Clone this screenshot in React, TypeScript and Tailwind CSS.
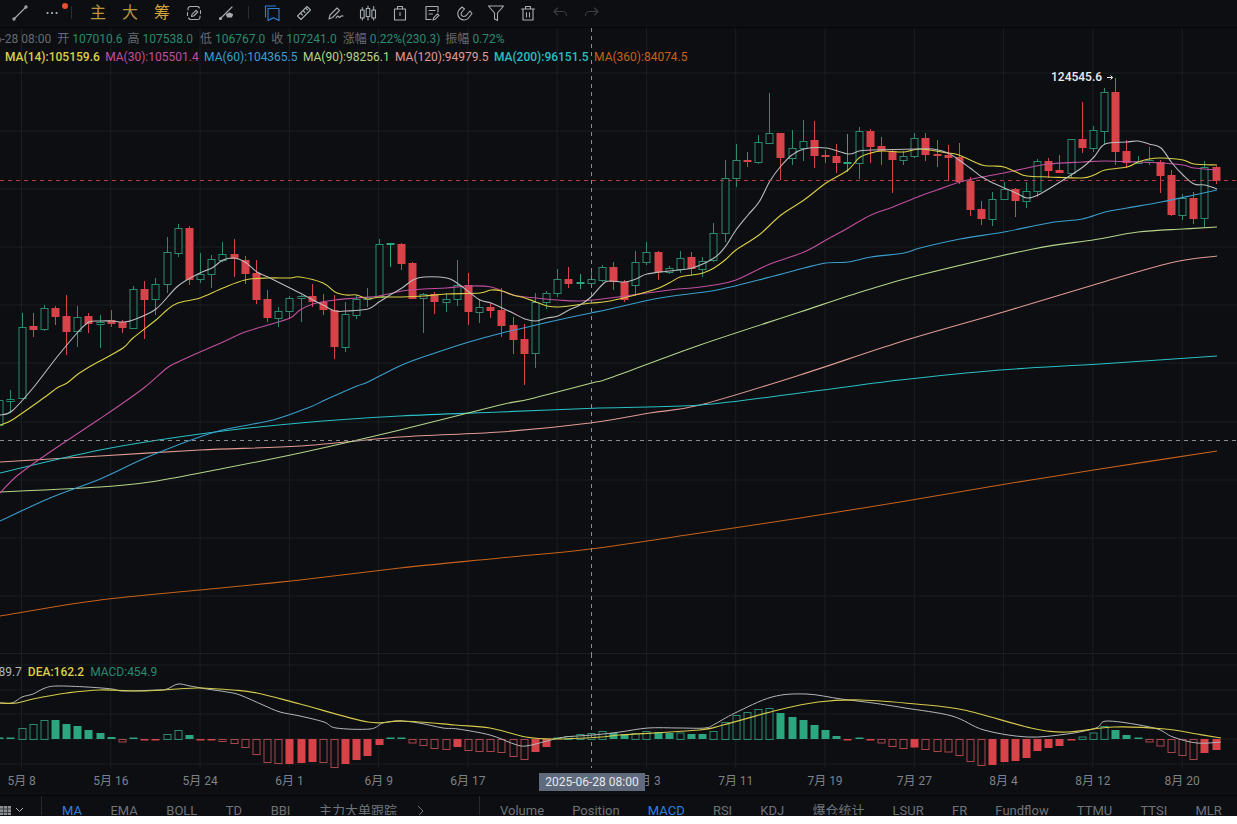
import React from 'react';

type Candle = [string, number, number, number, number];
type Bar = [string, number];
type Pt = [number, number];

const FONT = "font-['Roboto','Noto_Sans_CJK_SC',sans-serif]";

// x of a candle, index 0 sits on the 5月8 tick
const cx = (i: number) => 21.5 + 11.16 * i;

// type (h hollow green, r red, g solid green), high, top, bottom, low
const candles: Candle[] = [
  ['h', 400, 400, 425, 425], ['h', 390, 399, 401, 413],
  ['h', 313, 327, 398, 398], ['r', 313, 326, 330, 337], ['h', 305, 308, 329, 331], ['r', 306, 308, 317, 325],
  ['r', 295, 316, 332, 355], ['h', 306, 317, 331, 347], ['r', 313, 316, 324, 333], ['h', 315, 322, 324, 348],
  ['r', 310, 320, 324, 327], ['r', 320, 322, 328, 333], ['h', 286, 289, 328, 328], ['r', 281, 289, 300, 339],
  ['h', 278, 284, 299, 315], ['h', 237, 252, 284, 293], ['h', 224, 228, 253, 257], ['r', 226, 228, 280, 285],
  ['h', 253, 274, 279, 283], ['h', 255, 259, 274, 288], ['h', 242, 254, 260, 262], ['r', 239, 254, 259, 277],
  ['r', 256, 260, 274, 284], ['r', 260, 273, 300, 304], ['r', 290, 299, 318, 322], ['h', 307, 311, 318, 327],
  ['h', 296, 298, 311, 319], ['h', 295, 296, 298, 322], ['r', 284, 296, 302, 307], ['r', 294, 302, 310, 315],
  ['r', 295, 310, 347, 359], ['h', 302, 314, 347, 352], ['h', 295, 299, 315, 319], ['h', 288, 297, 299, 307],
  ['h', 239, 244, 297, 297], ['g', 243, 243, 245, 267], ['r', 243, 244, 264, 270], ['r', 262, 263, 299, 299],
  ['h', 293, 294, 298, 333], ['r', 292, 294, 302, 314], ['h', 293, 299, 302, 312], ['h', 260, 285, 299, 306],
  ['r', 273, 285, 312, 325], ['h', 299, 307, 312, 323], ['r', 303, 307, 311, 318], ['r', 288, 310, 326, 337],
  ['r', 317, 325, 340, 354], ['r', 324, 339, 354, 385], ['h', 293, 302, 353, 368], ['h', 291, 293, 302, 309],
  ['h', 269, 279, 293, 297], ['r', 267, 279, 284, 288], ['g', 274, 282, 283, 289], ['h', 269, 279, 283, 285],
  ['h', 265, 267, 280, 282], ['r', 262, 267, 282, 290], ['r', 280, 282, 300, 302], ['h', 251, 262, 285, 296],
  ['h', 242, 252, 262, 265], ['r', 251, 252, 272, 280], ['h', 266, 268, 272, 274], ['h', 251, 258, 269, 273],
  ['r', 252, 257, 269, 275], ['h', 257, 261, 269, 277], ['h', 223, 233, 260, 262], ['h', 160, 178, 233, 242],
  ['h', 144, 160, 178, 187], ['r', 152, 160, 162, 167], ['h', 135, 142, 162, 164], ['h', 93, 133, 143, 144],
  ['r', 133, 133, 158, 180], ['h', 130, 148, 158, 165], ['h', 120, 141, 148, 161], ['r', 121, 140, 156, 168],
  ['r', 150, 155, 157, 163], ['r', 144, 156, 163, 173], ['g', 134, 162, 163, 172], ['h', 127, 131, 163, 179],
  ['r', 129, 131, 147, 163], ['r', 137, 146, 151, 165], ['r', 149, 151, 160, 193], ['h', 151, 156, 160, 165],
  ['h', 133, 138, 156, 158], ['r', 133, 138, 155, 161], ['r', 140, 154, 156, 167], ['r', 145, 155, 158, 181],
  ['r', 143, 157, 182, 184], ['r', 177, 181, 210, 216], ['r', 201, 209, 219, 225], ['h', 192, 199, 219, 226],
  ['h', 182, 189, 199, 200], ['r', 188, 189, 201, 217], ['h', 182, 191, 201, 208], ['h', 159, 161, 191, 197],
  ['r', 158, 161, 171, 178], ['r', 155, 170, 173, 173], ['h', 139, 139, 173, 178], ['r', 102, 139, 148, 153],
  ['h', 126, 130, 148, 152], ['h', 88, 92, 131, 145], ['r', 78, 92, 152, 165], ['r', 140, 151, 163, 168],
  ['h', 156, 161, 163, 163], ['h', 147, 160, 162, 165], ['r', 160, 162, 176, 193], ['r', 170, 175, 215, 216],
  ['h', 194, 198, 215, 220], ['r', 192, 198, 219, 224], ['h', 161, 167, 218, 227], ['r', 166, 167, 181, 184],
];

const maLines: { color: string; pts: Pt[] }[] = [
  {
    color: '#e09a94',
    pts: [[0, 462], [100, 456], [200, 450], [300, 446], [400, 437], [500, 432], [590, 423], [650, 413], [700, 405], [800, 375], [900, 342], [1000, 313], [1100, 283], [1170, 263], [1217, 256]],
  },
  {
    color: '#29bfc4',
    pts: [[0, 473], [100, 450], [200, 434], [300, 423], [400, 416], [500, 412], [600, 408], [700, 405], [800, 393], [900, 380], [1000, 370], [1100, 364], [1217, 356]],
  },
  {
    color: '#c8611c',
    pts: [[0, 616], [100, 600], [200, 590], [300, 580], [400, 568], [500, 558], [590, 549], [700, 533], [800, 518], [900, 502], [1000, 485], [1100, 469], [1217, 451]],
  },
  {
    color: '#b5d48a',
    pts: [[0, 492], [100, 487], [150, 482], [215, 470], [300, 453], [400, 430], [500, 405], [530, 399], [592, 383], [610, 378], [700, 345], [800, 312], [867, 290], [920, 275], [1033, 249], [1093, 240], [1138, 232], [1183, 229], [1217, 227]],
  },
  {
    color: '#3a9fcf',
    pts: [[0, 521], [50, 498], [100, 479], [150, 456], [215, 432], [273, 420], [310, 407], [325, 400], [357, 386], [368, 382], [402, 365], [435, 353], [469, 342], [502, 333], [536, 325], [558, 320], [591, 313], [610, 309], [660, 298], [717, 290], [770, 277], [804, 268], [826, 263], [848, 262], [871, 257], [904, 253], [920, 248], [960, 239], [1004, 232], [1049, 223], [1082, 219], [1105, 212], [1127, 208], [1161, 202], [1194, 195], [1217, 190]],
  },
  {
    color: '#c0509f',
    pts: [[0, 493], [18, 475], [50, 452], [98, 420], [123, 403], [145, 387], [167, 368], [178, 362], [200, 352], [223, 342], [245, 332], [268, 325], [290, 318], [300, 310], [313, 304], [335, 300], [357, 298], [379, 296], [402, 291], [424, 289], [446, 288], [469, 286], [491, 287], [513, 295], [536, 298], [558, 300], [580, 301], [610, 298], [670, 290], [692, 288], [714, 285], [736, 280], [770, 264], [804, 252], [826, 240], [848, 228], [871, 215], [893, 207], [920, 196], [937, 190], [960, 182], [982, 177], [1004, 173], [1027, 168], [1049, 164], [1082, 162], [1105, 161], [1138, 162], [1161, 163], [1183, 165], [1194, 168], [1217, 170]],
  },
  {
    color: '#dccf45',
    pts: [[0, 425], [12, 420], [45, 397], [57, 388], [67, 383], [78, 374], [89, 367], [100, 361], [123, 348], [133, 338], [156, 320], [167, 310], [178, 303], [200, 298], [223, 288], [245, 280], [268, 278], [290, 278], [300, 277], [323, 283], [335, 292], [346, 295], [357, 295], [368, 299], [379, 297], [402, 297], [424, 296], [446, 294], [480, 293], [491, 290], [502, 291], [513, 295], [525, 298], [536, 302], [547, 306], [558, 307], [569, 306], [591, 303], [610, 301], [653, 290], [669, 283], [680, 277], [692, 275], [703, 273], [714, 268], [725, 260], [736, 250], [759, 235], [781, 215], [804, 200], [826, 183], [848, 170], [859, 158], [871, 153], [882, 151], [904, 152], [920, 149], [948, 153], [959, 155], [982, 165], [993, 166], [1004, 167], [1016, 172], [1027, 176], [1049, 177], [1082, 178], [1094, 175], [1105, 170], [1127, 167], [1138, 162], [1149, 159], [1161, 158], [1183, 160], [1194, 164], [1217, 165]],
  },
  {
    color: '#b9bbbd',
    pts: [[0, 415], [12, 411], [33, 388], [57, 357], [78, 332], [89, 322], [100, 321], [112, 321], [123, 322], [133, 320], [156, 309], [178, 286], [200, 273], [212, 268], [223, 260], [234, 258], [245, 262], [257, 272], [268, 277], [290, 288], [300, 293], [313, 300], [323, 305], [335, 311], [346, 311], [368, 309], [379, 302], [390, 295], [402, 288], [413, 280], [424, 277], [447, 278], [457, 283], [469, 292], [480, 300], [491, 303], [502, 308], [513, 313], [525, 319], [536, 321], [547, 318], [558, 316], [569, 310], [580, 305], [591, 297], [603, 284], [610, 281], [625, 282], [636, 279], [647, 274], [669, 271], [692, 268], [714, 258], [725, 247], [736, 230], [748, 215], [759, 202], [770, 181], [781, 166], [792, 155], [804, 149], [826, 148], [848, 154], [859, 151], [871, 150], [917, 149], [933, 149], [948, 153], [959, 160], [970, 168], [982, 177], [993, 183], [1016, 193], [1027, 198], [1038, 195], [1060, 182], [1083, 167], [1094, 157], [1105, 144], [1127, 142], [1138, 141], [1149, 144], [1161, 148], [1172, 163], [1183, 175], [1194, 184], [1205, 185], [1217, 189]],
  },
];

// MACD histogram: type (h hollow green, g green, o hollow red, r red), height
const bars: Bar[] = [
  ['g', 1.5], ['g', 1.5], ['h', 11], ['h', 15], ['h', 19], ['g', 19], ['g', 15], ['g', 13], ['g', 9], ['g', 6],
  ['g', 2], ['o', 2.5], ['g', 1.5], ['r', 1.5], ['r', 1.5], ['h', 5], ['h', 9], ['g', 4], ['r', 1.5], ['r', 1.5],
  ['o', 2], ['o', 4], ['o', 8], ['o', 15], ['o', 23], ['o', 24], ['r', 25], ['r', 24], ['r', 23], ['o', 23],
  ['o', 28], ['r', 25], ['r', 21], ['r', 17], ['r', 6], ['g', 1.5], ['g', 1.5], ['o', 3.5], ['o', 6], ['o', 9],
  ['o', 10], ['r', 8], ['o', 11], ['o', 12], ['o', 12], ['o', 13], ['o', 17], ['o', 20], ['r', 13], ['r', 8],
  ['g', 1.5], ['h', 3], ['h', 5], ['h', 6], ['h', 8], ['g', 6], ['g', 5], ['h', 6], ['h', 8], ['g', 7],
  ['g', 6], ['h', 6.5], ['g', 5], ['g', 5], ['h', 8], ['h', 17], ['h', 24], ['h', 27], ['h', 30], ['h', 31],
  ['g', 26], ['g', 22], ['g', 19], ['g', 14], ['g', 9], ['g', 3], ['r', 1.5], ['g', 1.5], ['r', 1.5], ['o', 3.5],
  ['o', 7], ['o', 9], ['r', 8.5], ['o', 10], ['o', 12], ['o', 12.5], ['o', 16], ['o', 22], ['o', 26], ['r', 26],
  ['r', 23], ['r', 22], ['r', 19], ['r', 12], ['r', 9], ['r', 7], ['r', 1.5], ['h', 2.5], ['h', 6.5], ['h', 13],
  ['g', 9], ['g', 4], ['g', 1.5], ['o', 2.5], ['o', 6.5], ['o', 13], ['o', 16], ['o', 20], ['r', 14], ['r', 11],
];

const difLine: Pt[] = [[0, 703], [12, 703], [22, 697], [33, 694], [45, 688], [57, 686], [87, 687], [112, 689], [123, 691], [157, 690], [167, 689], [178, 684], [190, 686], [207, 689], [227, 692], [240, 695], [263, 705], [280, 712], [300, 716], [324, 722], [336, 728], [370, 729], [383, 723], [399, 721], [419, 723], [443, 728], [458, 729], [490, 735], [514, 744], [526, 746], [547, 741], [565, 737], [593, 735], [620, 732], [648, 728], [679, 728], [705, 728], [715, 724], [735, 713], [772, 697], [806, 694], [841, 699], [873, 703], [905, 708], [952, 716], [984, 730], [1027, 737], [1067, 734], [1096, 728], [1108, 721], [1154, 728], [1173, 737], [1197, 743], [1221, 742]];
const deaLine: Pt[] = [[0, 703], [17, 703], [33, 699], [67, 693], [100, 690], [145, 691], [177, 689], [200, 688], [233, 690], [257, 693], [300, 704], [368, 722], [403, 721], [455, 725], [490, 728], [526, 737], [553, 739], [601, 737], [620, 735], [699, 730], [723, 725], [778, 710], [818, 702], [861, 700], [916, 704], [964, 710], [1031, 728], [1067, 732], [1114, 727], [1165, 729], [1197, 734], [1221, 738]];

const gridX = Array.from({ length: 14 }, (_, k) => 21.5 + 89.28 * k);

// catmull-rom through the sampled points, keeps the averages from looking jagged
const smooth = (pts: Pt[]) => {
  let d = `M${pts[0][0]} ${pts[0][1]}`;
  for (let i = 0; i < pts.length - 1; i++) {
    const p0 = pts[i - 1] || pts[i];
    const p1 = pts[i];
    const p2 = pts[i + 1];
    const p3 = pts[i + 2] || p2;
    const c1x = p1[0] + (p2[0] - p0[0]) / 6;
    const c1y = p1[1] + (p2[1] - p0[1]) / 6;
    const c2x = p2[0] - (p3[0] - p1[0]) / 6;
    const c2y = p2[1] - (p3[1] - p1[1]) / 6;
    d += ` C${c1x.toFixed(1)} ${c1y.toFixed(1)} ${c2x.toFixed(1)} ${c2y.toFixed(1)} ${p2[0]} ${p2[1]}`;
  }
  return d;
};

const GREEN = '#2c8a6f';
const GREEN_FILL = '#2ca67f';
const RED = '#d8434a';

const MainChart: React.FC = () => (
  <svg className="block w-full h-full" viewBox="0 28 1237 626">
    {gridX.map((x) => <line key={x} x1={x} x2={x} y1={28} y2={654} stroke="#1b1e22" />)}
    {[73, 131, 189, 247, 305, 363, 422, 480, 538, 596, 653.5].map((y) => (
      <line key={y} x1={0} x2={1237} y1={y} y2={y} stroke="#1b1e22" />
    ))}
    {candles.map(([type, high, top, bottom, low], n) => {
      const x = Math.round(cx(n - 2)) + 0.5;
      const color = type === 'r' ? RED : type === 'g' ? GREEN_FILL : GREEN;
      return (
        <g key={n}>
          <line x1={x} x2={x} y1={high} y2={top} stroke={color} />
          <line x1={x} x2={x} y1={bottom} y2={low} stroke={color} />
          {type === 'h' ? (
            <rect x={x - 3.5} y={top + 0.5} width={7} height={Math.max(bottom - top, 1)} fill="#0c0e11" stroke={color} />
          ) : (
            <rect x={x - 4} y={top} width={8} height={Math.max(bottom - top, 2)} fill={color} />
          )}
        </g>
      );
    })}
    {maLines.map((l) => (
      <path key={l.color} d={smooth(l.pts)} fill="none" stroke={l.color} strokeWidth={1.1} />
    ))}
    <line x1={0} x2={1237} y1={180.5} y2={180.5} stroke="#a8404e" strokeDasharray="4 4" />
    <line x1={0} x2={1237} y1={440.5} y2={440.5} stroke="#8a8d90" strokeDasharray="4 4" />
    <line x1={591.5} x2={591.5} y1={28} y2={654} stroke="#8a8d90" strokeDasharray="4 4" />
    <path d="M1107 77.5h5.5M1110.5 75.5l2.2 2-2.2 2" fill="none" stroke="#e8e8e8" />
  </svg>
);

const MacdChart: React.FC = () => (
  <svg className="block w-full h-full" viewBox="0 654 1237 114">
    {gridX.map((x) => <line key={x} x1={x} x2={x} y1={654} y2={768} stroke="#1b1e22" />)}
    {[665, 690, 714, 739, 764].map((y) => (
      <line key={y} x1={0} x2={1237} y1={y} y2={y} stroke="#1b1e22" />
    ))}
    {bars.map(([type, h], n) => {
      const x = Math.round(cx(n - 2)) + 0.5;
      const up = type === 'h' || type === 'g';
      const y = up ? 739 - h : 739;
      if (type === 'h' || type === 'o') {
        const c = type === 'h' ? GREEN : '#a8464c';
        return <rect key={n} x={x - 3.5} y={y + 0.5} width={7} height={h} fill="none" stroke={c} />;
      }
      return <rect key={n} x={x - 4} y={y} width={8} height={h} fill={type === 'g' ? GREEN_FILL : RED} />;
    })}
    <path d={smooth(difLine)} fill="none" stroke="#b4b6b8" strokeWidth={1} />
    <path d={smooth(deaLine)} fill="none" stroke="#d6ca4c" strokeWidth={1.2} />
    <line x1={591.5} x2={591.5} y1={654} y2={768} stroke="#8a8d90" strokeDasharray="4 4" />
  </svg>
);

const Ico: React.FC<{ children: React.ReactNode; color?: string }> = ({ children, color = '#a9adb2' }) => (
  <svg width="18" height="18" viewBox="0 0 18 18" fill="none" stroke={color} strokeWidth="1.1" strokeLinecap="round" strokeLinejoin="round">
    {children}
  </svg>
);

const Slot: React.FC<{ children: React.ReactNode }> = ({ children }) => (
  <div className="relative w-8 h-[26px] flex items-center justify-center shrink-0">{children}</div>
);

const Divider: React.FC = () => <div className="w-px h-[13px] bg-[#2a2d31] shrink-0" />;

const Toolbar: React.FC = () => (
  <div className="h-7 flex items-center pl-1 pb-[2px] bg-[#0c0e11] border-b border-[#050607]">
    <Slot>
      <Ico><path d="M3 15 15 3" /><circle cx="3" cy="15" r="1.1" /><circle cx="15" cy="3" r="1.1" /></Ico>
    </Slot>
    <Slot>
      <Ico color="#b5b8bc"><path d="M4.5 9h.1M9 9h.1M13.5 9h.1" strokeWidth="2" /></Ico>
      <span className="absolute right-0 top-[3px] w-[6px] h-[6px] rounded-full bg-[#e5502e]" />
    </Slot>
    <div className="w-[3px] shrink-0" />
    <Divider />
    <div className="w-[10px] shrink-0" />
    {[['主', 'text-[#b8963f]'], ['大', 'text-[#b8963f]'], ['筹', 'text-[#d6a63a]']].map(([t, c]) => (
      <Slot key={t}><span className={`text-[16px] ${c}`}>{t}</span></Slot>
    ))}
    <Slot>
      <Ico>
        <path d="M3 6V5a2.5 2.5 0 0 1 2.5-2.5H13l1.5 1.5M15 12v1a2.5 2.5 0 0 1-2.5 2.5H5L3.5 14" />
        <path d="M2.5 8.5v3M15.5 6.5v3M6.5 12.5l.5-2.2 4-4 1.7 1.7-4 4-2.2.5Z" />
      </Ico>
    </Slot>
    <Slot>
      <Ico><path d="M3 15 15 3" /><circle cx="3.5" cy="14.5" r="1" /><path d="m9.5 10.5 3-1.5 3 1.5-1 2.5h-4z" fill="#a9adb2" /></Ico>
    </Slot>
    <div className="w-[6px] shrink-0" />
    <Divider />
    <div className="w-[7px] shrink-0" />
    <Slot>
      <Ico color="#2f80d8">
        <path d="M2.5 13V2h10" /><path d="M5 4.5h11v12l-5.500-2.800L5 16.500z" />
      </Ico>
    </Slot>
    <Slot>
      <Ico>
        <path d="M2.5 12 12 2.5l3.500 3.500L6 15.500z" /><path d="M6 9.500l1.500 1.500M8.500 7l1.500 1.500M11 4.500l1.500 1.500" />
      </Ico>
    </Slot>
    <Slot>
      <Ico>
        <path d="M2 15 3 11 10 4l2.500 2.500-7 7z" /><path d="M9 14c1-1.500 2-2.500 2.500-1.500s.5 1.500 1.500.5 1.500-1.500 3-1" />
      </Ico>
    </Slot>
    <Slot>
      <Ico>
        <rect x="1.5" y="6" width="3.6" height="8" /><rect x="7.2" y="4.5" width="3.6" height="8" /><rect x="12.9" y="6" width="3.6" height="8" />
        <path d="M3.3 3.5V6M3.3 14v2M9 2v2.5M9 12.5V16M14.7 2.5V6M14.7 14v2" />
      </Ico>
    </Slot>
    <Slot>
      <Ico><rect x="3.5" y="5" width="11" height="11" /><path d="M6.5 5V2.5h5V5M9 8.5v3" /></Ico>
    </Slot>
    <Slot>
      <Ico>
        <path d="M15 8V2.5H3v13h5" /><path d="M6 6.5h6M6 10h3.500" /><path d="m10 16 .5-2.200 4-4 1.500 1.500-4 4z" />
      </Ico>
    </Slot>
    <Slot>
      <Ico>
        <path d="m7 3 2.500 2-3 3.500c-1 1.500 0 4 2 4s3-1 3.500-2L15 7l2 2.500-3.500 4.500c-2 2.500-6 2.500-8.500.5S2 8.500 4 6z" />
      </Ico>
    </Slot>
    <Slot>
      <Ico><path d="M1.5 2h15l-6 7v7.500l-3-1.500V9z" /></Ico>
    </Slot>
    <Slot>
      <Ico><path d="M2.5 5h13M6.5 5V2.500h5V5M4 5v11h10V5M7.5 8.500v4.500M10.500 8.500v4.500" /></Ico>
    </Slot>
    <Slot>
      <Ico color="#3a3d41"><path d="M3.5 7.500h8a4 4 0 0 1 4 4M6.500 4l-3.500 3.500L6.500 11" /></Ico>
    </Slot>
    <Slot>
      <Ico color="#3a3d41"><path d="M14.500 7.500h-8a4 4 0 0 0-4 4M11.500 4 15 7.500 11.500 11" /></Ico>
    </Slot>
  </div>
);

const Legend: React.FC = () => (
  <div className="absolute left-0 top-0 text-[12px] leading-[18px] whitespace-nowrap">
    <div className="h-[18px] mt-[2px] flex gap-[3px] text-[#666b71]">
      <span className="ml-[-12px] mr-[3px]">06-28 08:00</span>
      <span>开</span><span className="text-[#2b8a70] mr-[2px]">107010.6</span>
      <span>高</span><span className="text-[#2b8a70] mr-[4px]">107538.0</span>
      <span>低</span><span className="text-[#2b8a70] mr-[3px]">106767.0</span>
      <span>收</span><span className="text-[#2b8a70] mr-[3px]">107241.0</span>
      <span>涨幅</span><span className="text-[#2b8a70] mr-[2px]">0.22%(230.3)</span>
      <span>振幅</span><span className="text-[#2b8a70]">0.72%</span>
    </div>
    <div className="h-[18px] flex gap-[5.4px] pl-[5px]">
      <span className="text-[#dccf45] font-medium">MA(14):105159.6</span>
      <span className="text-[#c0509f]">MA(30):105501.4</span>
      <span className="text-[#3a9fcf]">MA(60):104365.5</span>
      <span className="text-[#b5d48a]">MA(90):98256.1</span>
      <span className="text-[#e09a94]">MA(120):94979.5</span>
      <span className="text-[#29bfc4] font-medium">MA(200):96151.5</span>
      <span className="text-[#c8611c]">MA(360):84074.5</span>
    </div>
  </div>
);

// the 6月 25 tick lies under the crosshair's date label
const axisLabels = ['5月 8', '5月 16', '5月 24', '6月 1', '6月 9', '6月 17', '', '7月 3', '7月 11', '7月 19', '7月 27', '8月 4', '8月 12', '8月 20'];
const leftTabs = ['MA', 'EMA', 'BOLL', 'TD', 'BBI', '主力大单跟踪'];
const rightTabs = ['Volume', 'Position', 'MACD', 'RSI', 'KDJ', '爆仓统计', 'LSUR', 'FR', 'Fundflow', 'TTMU', 'TTSI', 'MLR'];

const TabBar: React.FC = () => (
  <div className="h-5 flex items-start overflow-hidden text-[13px] leading-[18px] text-[#6f747a] whitespace-nowrap border-t border-[#050607]">
    <div className="w-[42px] h-full shrink-0 flex items-start pt-[10px] border-r border-[#26292d]">
      <svg width="11" height="10" viewBox="0 0 11 10" className="shrink-0">
        <rect width="11" height="10" fill="#8b8f93" />
        <path d="M0 3h11M0 6.5h11M3.5 0v10M7.5 0v10" stroke="#3c3f43" />
      </svg>
      <svg className="ml-[4px] mt-[1px]" width="9" height="6" viewBox="0 0 9 6" fill="none" stroke="#a9adb2"><path d="m1 1 3.5 3.5L8 1" /></svg>
    </div>
    <div className="w-[438px] h-full shrink-0 flex gap-[28.5px] pl-5 pt-[6px] border-r border-[#26292d]">
      {leftTabs.map((t) => (
        <span key={t} className={t === 'MA' ? 'text-[#2f7fe0]' : ''}>{t}</span>
      ))}
      <svg className="-ml-[8px] mt-[3px]" width="7" height="12" viewBox="0 0 7 12" fill="none" stroke="#6f747a"><path d="m1 1 5 5-5 5" /></svg>
    </div>
    <div className="flex gap-[28.2px] pl-5 pt-[6px]">
      {rightTabs.map((t) => (
        <span key={t} className={t === 'MACD' ? 'text-[#2f7fe0]' : ''}>{t}</span>
      ))}
    </div>
  </div>
);

const App: React.FC = () => (
  <div className={`${FONT} w-[1237px] h-[816px] overflow-hidden bg-[#0c0e11] flex flex-col`}>
    <Toolbar />
    <div className="relative h-[626px] shrink-0">
      <MainChart />
      <Legend />
      <div className="absolute left-[1051px] top-[41px] text-[12px] leading-4 font-medium text-[#eceded]">124545.6</div>
    </div>
    <div className="relative h-[114px] shrink-0">
      <MacdChart />
      <div className="absolute left-0 top-[10px] flex gap-[6px] text-[12px] leading-4 whitespace-nowrap">
        <span className="ml-[-29px] text-[#b4b6b8]">DIF:289.7</span>
        <span className="text-[#dccf45] font-medium">DEA:162.2</span>
        <span className="text-[#2b8a70]">MACD:454.9</span>
      </div>
    </div>
    <div className="relative h-[27px] shrink-0 overflow-hidden">
      <div className="flex ml-[-23px] pt-[5px] text-[12px] leading-4 text-[#7d8288] whitespace-nowrap">
        {axisLabels.map((t, n) => <span key={n} className="w-[89.28px] text-center shrink-0">{t}</span>)}
      </div>
      <div className="absolute left-[539px] top-[5px] w-[106px] h-[18px] bg-[#5f6b7c] text-[12px] leading-[18px] text-center text-[#e6e8ea]">2025-06-28 08:00</div>
    </div>
    <TabBar />
  </div>
);

export default App;
